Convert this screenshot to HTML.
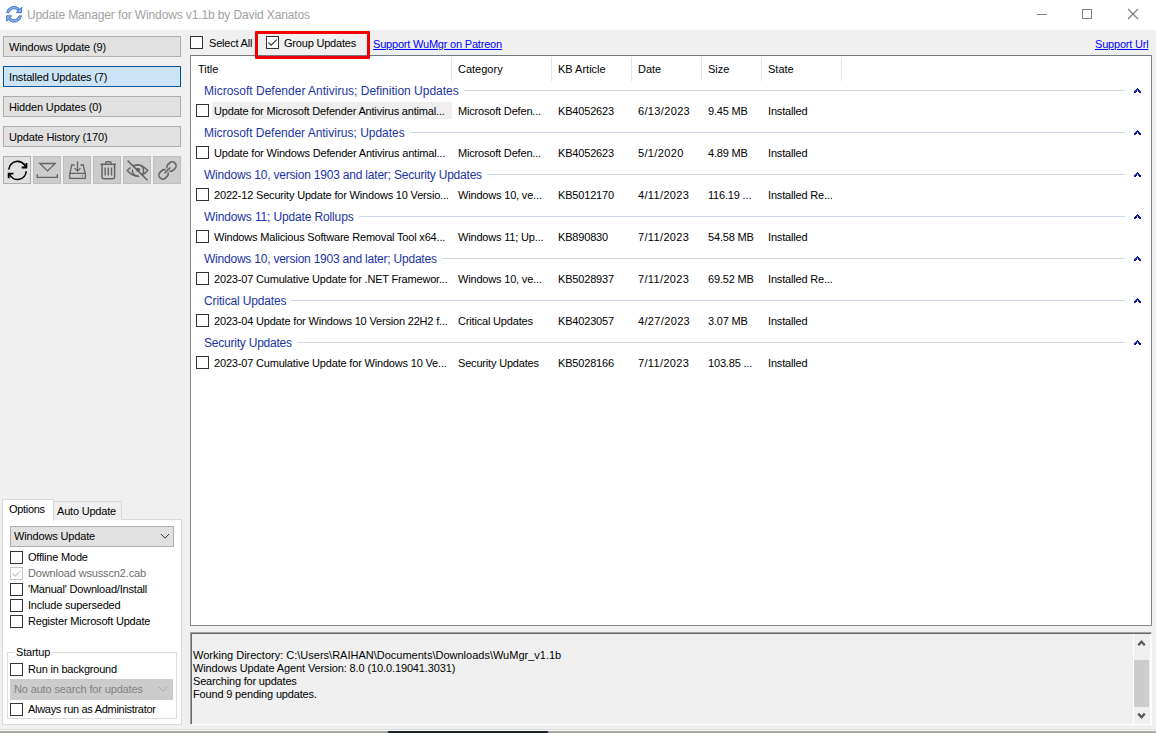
<!DOCTYPE html>
<html><head><meta charset="utf-8">
<style>
*{box-sizing:border-box;margin:0;padding:0}
html,body{width:1156px;height:733px;overflow:hidden;background:#f0f0f0;font-family:"Liberation Sans",sans-serif;font-size:11px;color:#000}
.a{position:absolute}
.t{position:absolute;white-space:nowrap;line-height:13px}
#titlebar{left:0;top:0;width:1156px;height:30px;background:#fff}
.btn{position:absolute;left:3px;width:178px;height:21px;background:#e1e1e1;border:1px solid #adadad}
.btn.sel{background:#cce4f7;border-color:#005499}
.btn span{position:absolute;left:5px;top:4px;white-space:nowrap;letter-spacing:-0.15px;line-height:13px}
.tb{position:absolute;top:156px;width:28px;height:28px;background:#cccccc;border:1px solid #bfbfbf}
.tb svg{position:absolute;left:-1px;top:-1px}
.cb{position:absolute;width:13px;height:13px;border:1px solid #333;background:#fff}
.cb.dis{border-color:#c5c5c5}
#list{left:190px;top:55px;width:962px;height:571px;background:#fff;border:1px solid #828790;border-top-color:#747880}
.hs{position:absolute;top:57px;width:1px;height:24px;background:#e5e5e5}
.hd{position:absolute;top:63px;white-space:nowrap;line-height:13px}
.gh{position:absolute;left:204px;width:921px;display:flex;align-items:center;font-size:12px;color:#1c34a4;white-space:nowrap;line-height:14px}
.gl{flex:1;height:1px;background:#d0d9ec;margin-left:5px;position:relative;top:-1px}
.chev{position:absolute;left:1134px}
.it{position:absolute;white-space:nowrap;line-height:13px;letter-spacing:-0.18px}
.hl{position:absolute;left:212px;width:240px;height:17px;background:#efefef}
#log{left:190px;top:632px;width:962px;height:93px;background:#f0f0f0;border-top:1px solid #a0a0a0;border-left:1px solid #a0a0a0;border-right:1px solid #fff;border-bottom:1px solid #fff;box-shadow:inset 1px 1px 0 #696969}
.lk{color:#0000ff;text-decoration:underline}
</style></head><body>
<!-- title bar -->
<div id="titlebar" class="a"></div>
<svg class="a" style="left:0;top:0" width="28" height="28" viewBox="0 0 28 28">
  <g fill="#86b2f0" stroke="#3d71c4" stroke-width="0.9" stroke-linejoin="miter">
  <g id="ua"><path d="M6.6 12.7 A7.45 7.45 0 0 1 19.3 8.6 L17.6 10.3 A5.1 5.1 0 0 0 9 12.7 Z"/>
  <path d="M21.5 7.2 L21.5 12.7 L16.3 12.7 Z"/></g>
  <use href="#ua" transform="rotate(180 14.05 14.25)"/>
  </g>
</svg>
<div class="t" style="left:27px;top:9px;font-size:12px;color:#a2a2a2;letter-spacing:-0.12px">Update Manager for Windows v1.1b by David Xanatos</div>
<div class="a" style="left:1037px;top:14px;width:10px;height:1px;background:#808080"></div>
<div class="a" style="left:1082px;top:9px;width:10px;height:10px;border:1px solid #808080"></div>
<svg class="a" style="left:1127px;top:8px" width="12" height="12" viewBox="0 0 12 12"><path d="M1 1 L11 11 M11 1 L1 11" stroke="#7a7a7a" stroke-width="1.1"/></svg>

<!-- left nav buttons -->
<div class="btn" style="top:36px"><span>Windows Update (9)</span></div>
<div class="btn sel" style="top:66px"><span>Installed Updates (7)</span></div>
<div class="btn" style="top:96px"><span>Hidden Updates (0)</span></div>
<div class="btn" style="top:126px"><span>Update History (170)</span></div>

<!-- toolbar -->
<div class="tb" style="left:3px;background:#e1e1e1;border-color:#adadad">
<svg width="28" height="28" viewBox="0 0 28 28" fill="none" stroke="#000" stroke-width="1.6">
  <path d="M5.8 13.6 A8.7 8.7 0 0 1 22.6 10.9"/>
  <path d="M23.4 6.9 V11.5 H18.7" stroke-width="1.9"/>
  <path d="M23.2 15.2 A8.7 8.7 0 0 1 6.6 18.4"/>
  <path d="M5.7 22.3 V17.6 H10.5" stroke-width="1.9"/>
</svg></div>
<div class="tb" style="left:33px">
<svg width="28" height="28" viewBox="0 0 28 28" fill="none" stroke="#646464" stroke-width="1.3">
  <path d="M6.8 7.5 H22.2 L14.5 14.9 Z"/>
  <path d="M4.3 18.2 V21.4 H24.3 V18.2" stroke-width="1.4"/>
</svg></div>
<div class="tb" style="left:63px">
<svg width="28" height="28" viewBox="0 0 28 28" fill="none" stroke="#646464" stroke-width="1.3">
  <path d="M11.6 9 H8.7 L7 17.4 M17.4 9 H20.3 L22.1 17.4"/>
  <rect x="6.8" y="17.4" width="15.6" height="5"/>
  <path d="M14.5 5.2 V15 M11.5 12.1 L14.5 15.1 L17.5 12.1"/>
  <circle cx="19.3" cy="20" r="0.7" fill="#646464" stroke="none"/>
</svg></div>
<div class="tb" style="left:93px">
<svg width="28" height="28" viewBox="0 0 28 28" fill="none" stroke="#646464" stroke-width="1.5">
  <path d="M7.5 8.3 H22.9"/>
  <path d="M12.7 8.3 V7 Q12.7 5.8 13.9 5.8 H16.9 Q18.1 5.8 18.1 7 V8.3"/>
  <path d="M9 8.3 V21 Q9 22.7 10.7 22.7 H19.9 Q21.6 22.7 21.6 21 V8.3"/>
  <path d="M12.2 11.5 V19.5 M15.3 11.5 V19.5 M18.5 11.5 V19.5" stroke-width="1.4"/>
</svg></div>
<div class="tb" style="left:123px">
<svg width="28" height="28" viewBox="0 0 28 28" fill="none" stroke="#646464" stroke-width="1.4">
  <path d="M4.3 14.5 Q14.5 2.9 24.7 14.5 Q14.5 25.8 4.3 14.5 Z"/>
  <circle cx="15" cy="14.5" r="5.6"/>
  <path d="M3.4 5.6 L23.2 25.3" stroke="#cccccc" stroke-width="2.4"/>
  <circle cx="15.1" cy="13.8" r="2.1" fill="#646464" stroke="none"/>
  <path d="M4.6 4.6 L24.4 24.3" stroke-width="1.5"/>
</svg></div>
<div class="tb" style="left:153px">
<svg width="28" height="28" viewBox="0 0 28 28" fill="none" stroke="#646464" stroke-width="1.6">
  <path transform="translate(18.4 10.6) rotate(-45)" d="M-4.6 -1.75 A3.9 3.9 0 0 1 -1.1 -3.9 L1.1 -3.9 A3.9 3.9 0 0 1 1.1 3.9 L-1.1 3.9 A3.9 3.9 0 0 1 -4.6 1.75"/>
  <path transform="translate(10.6 18.4) rotate(135)" d="M-4.6 -1.75 A3.9 3.9 0 0 1 -1.1 -3.9 L1.1 -3.9 A3.9 3.9 0 0 1 1.1 3.9 L-1.1 3.9 A3.9 3.9 0 0 1 -4.6 1.75"/>
  <path d="M11.6 17.3 L17.4 11.5"/>
</svg></div>
<!-- top controls -->
<div class="cb" style="left:190px;top:36px"></div>
<div class="t" style="left:209px;top:37px;letter-spacing:-0.2px">Select All</div>
<div class="cb" style="left:266px;top:36px"></div>
<svg class="a" style="left:266px;top:36px" width="13" height="13" viewBox="0 0 13 13"><path d="M2.5 6.5 L5.2 9.2 L10.6 3.6" fill="none" stroke="#333" stroke-width="1.1"/></svg>
<div class="t" style="left:284px;top:37px;letter-spacing:-0.2px">Group Updates</div>
<div class="a" style="left:255px;top:31px;width:115px;height:28px;border:3px solid #f20000;border-radius:1px;z-index:5"></div>
<div class="t lk" style="left:373px;top:38px;letter-spacing:-0.2px">Support WuMgr on Patreon</div>
<div class="t lk" style="left:1095px;top:38px;letter-spacing:-0.2px">Support Url</div>

<!-- list -->
<div id="list" class="a"></div>
<div class="hd" style="left:198px">Title</div>
<div class="hs" style="left:451px"></div>
<div class="hd" style="left:458px">Category</div>
<div class="hs" style="left:551px"></div>
<div class="hd" style="left:558px">KB Article</div>
<div class="hs" style="left:631px"></div>
<div class="hd" style="left:638px">Date</div>
<div class="hs" style="left:701px"></div>
<div class="hd" style="left:708px">Size</div>
<div class="hs" style="left:761px"></div>
<div class="hd" style="left:768px">State</div>
<div class="hs" style="left:841px"></div>

<div class="gh" style="top:84px"><span style="letter-spacing:0px">Microsoft Defender Antivirus; Definition Updates</span><i class="gl"></i></div>
<svg class="chev" style="top:88px" width="7" height="5" viewBox="0 0 7 5" shape-rendering="crispEdges" fill="#0d2296"><rect x="3" y="0" width="1" height="1"/><rect x="2" y="1" width="3" height="1"/><rect x="1" y="2" width="2" height="1"/><rect x="4" y="2" width="2" height="1"/><rect x="3" y="2" width="1" height="1" opacity="0.45"/><rect x="0" y="3" width="3" height="1"/><rect x="4" y="3" width="3" height="1"/><rect x="0" y="4" width="2" height="1"/><rect x="5" y="4" width="2" height="1"/></svg>
<div class="hl" style="top:102px"></div>
<div class="cb" style="left:196px;top:104px"></div>
<div class="it" style="left:214px;top:105px">Update for Microsoft Defender Antivirus antimal...</div>
<div class="it" style="left:458px;top:105px">Microsoft Defen...</div>
<div class="it" style="left:558px;top:105px">KB4052623</div>
<div class="it" style="left:638px;top:105px;letter-spacing:0.35px">6/13/2023</div>
<div class="it" style="left:708px;top:105px">9.45 MB</div>
<div class="it" style="left:768px;top:105px">Installed</div>
<div class="gh" style="top:126px"><span style="letter-spacing:-0.02px">Microsoft Defender Antivirus; Updates</span><i class="gl"></i></div>
<svg class="chev" style="top:130px" width="7" height="5" viewBox="0 0 7 5" shape-rendering="crispEdges" fill="#0d2296"><rect x="3" y="0" width="1" height="1"/><rect x="2" y="1" width="3" height="1"/><rect x="1" y="2" width="2" height="1"/><rect x="4" y="2" width="2" height="1"/><rect x="3" y="2" width="1" height="1" opacity="0.45"/><rect x="0" y="3" width="3" height="1"/><rect x="4" y="3" width="3" height="1"/><rect x="0" y="4" width="2" height="1"/><rect x="5" y="4" width="2" height="1"/></svg>
<div class="cb" style="left:196px;top:146px"></div>
<div class="it" style="left:214px;top:147px">Update for Windows Defender Antivirus antimal...</div>
<div class="it" style="left:458px;top:147px">Microsoft Defen...</div>
<div class="it" style="left:558px;top:147px">KB4052623</div>
<div class="it" style="left:638px;top:147px;letter-spacing:0.35px">5/1/2020</div>
<div class="it" style="left:708px;top:147px">4.89 MB</div>
<div class="it" style="left:768px;top:147px">Installed</div>
<div class="gh" style="top:168px"><span style="letter-spacing:-0.21px">Windows 10, version 1903 and later; Security Updates</span><i class="gl"></i></div>
<svg class="chev" style="top:172px" width="7" height="5" viewBox="0 0 7 5" shape-rendering="crispEdges" fill="#0d2296"><rect x="3" y="0" width="1" height="1"/><rect x="2" y="1" width="3" height="1"/><rect x="1" y="2" width="2" height="1"/><rect x="4" y="2" width="2" height="1"/><rect x="3" y="2" width="1" height="1" opacity="0.45"/><rect x="0" y="3" width="3" height="1"/><rect x="4" y="3" width="3" height="1"/><rect x="0" y="4" width="2" height="1"/><rect x="5" y="4" width="2" height="1"/></svg>
<div class="cb" style="left:196px;top:188px"></div>
<div class="it" style="left:214px;top:189px">2022-12 Security Update for Windows 10 Versio...</div>
<div class="it" style="left:458px;top:189px">Windows 10, ve...</div>
<div class="it" style="left:558px;top:189px">KB5012170</div>
<div class="it" style="left:638px;top:189px;letter-spacing:0.35px">4/11/2023</div>
<div class="it" style="left:708px;top:189px">116.19 ...</div>
<div class="it" style="left:768px;top:189px">Installed Re...</div>
<div class="gh" style="top:210px"><span style="letter-spacing:-0.14px">Windows 11; Update Rollups</span><i class="gl"></i></div>
<svg class="chev" style="top:214px" width="7" height="5" viewBox="0 0 7 5" shape-rendering="crispEdges" fill="#0d2296"><rect x="3" y="0" width="1" height="1"/><rect x="2" y="1" width="3" height="1"/><rect x="1" y="2" width="2" height="1"/><rect x="4" y="2" width="2" height="1"/><rect x="3" y="2" width="1" height="1" opacity="0.45"/><rect x="0" y="3" width="3" height="1"/><rect x="4" y="3" width="3" height="1"/><rect x="0" y="4" width="2" height="1"/><rect x="5" y="4" width="2" height="1"/></svg>
<div class="cb" style="left:196px;top:230px"></div>
<div class="it" style="left:214px;top:231px">Windows Malicious Software Removal Tool x64...</div>
<div class="it" style="left:458px;top:231px">Windows 11; Up...</div>
<div class="it" style="left:558px;top:231px">KB890830</div>
<div class="it" style="left:638px;top:231px;letter-spacing:0.35px">7/11/2023</div>
<div class="it" style="left:708px;top:231px">54.58 MB</div>
<div class="it" style="left:768px;top:231px">Installed</div>
<div class="gh" style="top:252px"><span style="letter-spacing:-0.22px">Windows 10, version 1903 and later; Updates</span><i class="gl"></i></div>
<svg class="chev" style="top:256px" width="7" height="5" viewBox="0 0 7 5" shape-rendering="crispEdges" fill="#0d2296"><rect x="3" y="0" width="1" height="1"/><rect x="2" y="1" width="3" height="1"/><rect x="1" y="2" width="2" height="1"/><rect x="4" y="2" width="2" height="1"/><rect x="3" y="2" width="1" height="1" opacity="0.45"/><rect x="0" y="3" width="3" height="1"/><rect x="4" y="3" width="3" height="1"/><rect x="0" y="4" width="2" height="1"/><rect x="5" y="4" width="2" height="1"/></svg>
<div class="cb" style="left:196px;top:272px"></div>
<div class="it" style="left:214px;top:273px">2023-07 Cumulative Update for .NET Framewor...</div>
<div class="it" style="left:458px;top:273px">Windows 10, ve...</div>
<div class="it" style="left:558px;top:273px">KB5028937</div>
<div class="it" style="left:638px;top:273px;letter-spacing:0.35px">7/11/2023</div>
<div class="it" style="left:708px;top:273px">69.52 MB</div>
<div class="it" style="left:768px;top:273px">Installed Re...</div>
<div class="gh" style="top:294px"><span style="letter-spacing:-0.14px">Critical Updates</span><i class="gl"></i></div>
<svg class="chev" style="top:298px" width="7" height="5" viewBox="0 0 7 5" shape-rendering="crispEdges" fill="#0d2296"><rect x="3" y="0" width="1" height="1"/><rect x="2" y="1" width="3" height="1"/><rect x="1" y="2" width="2" height="1"/><rect x="4" y="2" width="2" height="1"/><rect x="3" y="2" width="1" height="1" opacity="0.45"/><rect x="0" y="3" width="3" height="1"/><rect x="4" y="3" width="3" height="1"/><rect x="0" y="4" width="2" height="1"/><rect x="5" y="4" width="2" height="1"/></svg>
<div class="cb" style="left:196px;top:314px"></div>
<div class="it" style="left:214px;top:315px">2023-04 Update for Windows 10 Version 22H2 f...</div>
<div class="it" style="left:458px;top:315px">Critical Updates</div>
<div class="it" style="left:558px;top:315px">KB4023057</div>
<div class="it" style="left:638px;top:315px;letter-spacing:0.35px">4/27/2023</div>
<div class="it" style="left:708px;top:315px">3.07 MB</div>
<div class="it" style="left:768px;top:315px">Installed</div>
<div class="gh" style="top:336px"><span style="letter-spacing:-0.22px">Security Updates</span><i class="gl"></i></div>
<svg class="chev" style="top:340px" width="7" height="5" viewBox="0 0 7 5" shape-rendering="crispEdges" fill="#0d2296"><rect x="3" y="0" width="1" height="1"/><rect x="2" y="1" width="3" height="1"/><rect x="1" y="2" width="2" height="1"/><rect x="4" y="2" width="2" height="1"/><rect x="3" y="2" width="1" height="1" opacity="0.45"/><rect x="0" y="3" width="3" height="1"/><rect x="4" y="3" width="3" height="1"/><rect x="0" y="4" width="2" height="1"/><rect x="5" y="4" width="2" height="1"/></svg>
<div class="cb" style="left:196px;top:356px"></div>
<div class="it" style="left:214px;top:357px">2023-07 Cumulative Update for Windows 10 Ve...</div>
<div class="it" style="left:458px;top:357px">Security Updates</div>
<div class="it" style="left:558px;top:357px">KB5028166</div>
<div class="it" style="left:638px;top:357px;letter-spacing:0.35px">7/11/2023</div>
<div class="it" style="left:708px;top:357px">103.85 ...</div>
<div class="it" style="left:768px;top:357px">Installed</div>

<!-- log -->
<div id="log" class="a"></div>
<div class="t" style="left:193px;top:649px">Working Directory: C:\Users\RAIHAN\Documents\Downloads\WuMgr_v1.1b</div>
<div class="t" style="left:193px;top:662px;letter-spacing:-0.12px">Windows Update Agent Version: 8.0 (10.0.19041.3031)</div>
<div class="t" style="left:193px;top:675px;letter-spacing:-0.19px">Searching for updates</div>
<div class="t" style="left:193px;top:688px;letter-spacing:-0.17px">Found 9 pending updates.</div>


<!-- left tab control -->
<div class="a" style="left:2px;top:519px;width:180px;height:206px;background:#fff;border:1px solid #d9d9d9"></div>
<div class="a" style="left:53px;top:501px;width:69px;height:19px;background:#f0f0f0;border:1px solid #d9d9d9;border-bottom:none"></div>
<div class="a" style="left:2px;top:499px;width:52px;height:22px;background:#fff;border:1px solid #d9d9d9;border-bottom:none"></div>
<div class="t" style="left:9px;top:503px;letter-spacing:-0.3px">Options</div>
<div class="t" style="left:57px;top:505px;letter-spacing:-0.2px">Auto Update</div>
<div class="a" style="left:10px;top:526px;width:164px;height:21px;background:#e1e1e1;border:1px solid #adadad"></div>
<div class="t" style="left:14px;top:530px;letter-spacing:-0.15px">Windows Update</div>
<svg class="a" style="left:160px;top:533px" width="10" height="7" viewBox="0 0 10 7"><path d="M1 1 L5 5.2 L9 1" fill="none" stroke="#333" stroke-width="1"/></svg>
<div class="cb" style="left:10px;top:551px"></div><div class="t" style="left:28px;top:551px;letter-spacing:-0.2px">Offline Mode</div>
<div class="cb dis" style="left:10px;top:567px"></div>
<svg class="a" style="left:10px;top:567px" width="13" height="13" viewBox="0 0 13 13"><path d="M2.5 6.5 L5.2 9.2 L10.6 3.6" fill="none" stroke="#c5c5c5" stroke-width="1.1"/></svg>
<div class="t" style="left:28px;top:567px;color:#6d6d6d;letter-spacing:-0.15px">Download wsusscn2.cab</div>
<div class="cb" style="left:10px;top:583px"></div><div class="t" style="left:28px;top:583px;letter-spacing:-0.2px">'Manual' Download/Install</div>
<div class="cb" style="left:10px;top:599px"></div><div class="t" style="left:28px;top:599px;letter-spacing:-0.2px">Include superseded</div>
<div class="cb" style="left:10px;top:615px"></div><div class="t" style="left:28px;top:615px;letter-spacing:-0.2px">Register Microsoft Update</div>
<div class="a" style="left:7px;top:652px;width:170px;height:67px;border:1px solid #dcdcdc"></div>
<div class="t" style="left:14px;top:646px;padding:0 2px;background:#fff;letter-spacing:-0.2px">Startup</div>
<div class="cb" style="left:10px;top:663px"></div><div class="t" style="left:28px;top:663px;letter-spacing:-0.2px">Run in background</div>
<div class="a" style="left:10px;top:679px;width:163px;height:21px;background:#cccccc;border:1px solid #cccccc"></div>
<div class="t" style="left:14px;top:683px;color:#838383;letter-spacing:-0.15px">No auto search for updates</div>
<svg class="a" style="left:158px;top:686px" width="10" height="7" viewBox="0 0 10 7"><path d="M1 1 L5 5.2 L9 1" fill="none" stroke="#a8a8a8" stroke-width="1"/></svg>
<div class="cb" style="left:10px;top:703px"></div><div class="t" style="left:28px;top:703px;letter-spacing:-0.3px">Always run as Administrator</div>

<!-- log scrollbar -->
<div class="a" style="left:1133px;top:634px;width:18px;height:90px;background:#f0f0f0;border-left:1px solid #fff;border-right:1px solid #fff"></div>
<svg class="a" style="left:1137px;top:639px" width="9" height="8" viewBox="0 0 9 8"><path d="M1.2 6.2 L4.5 2.6 L7.8 6.2" fill="none" stroke="#5a5a5a" stroke-width="2.3"/></svg>
<div class="a" style="left:1134px;top:660px;width:15px;height:47px;background:#cdcdcd"></div>
<svg class="a" style="left:1137px;top:712px" width="9" height="8" viewBox="0 0 9 8"><path d="M1.2 1.6 L4.5 5.2 L7.8 1.6" fill="none" stroke="#5a5a5a" stroke-width="2.3"/></svg>
<!-- bottom strip -->
<div class="a" style="left:0;top:729px;width:1156px;height:1px;background:#dadada"></div>
<div class="a" style="left:0;top:730px;width:1156px;height:1px;background:#fff"></div>
<div class="a" style="left:0;top:731px;width:1156px;height:2px;background:#a9aaa5"></div>
<div class="a" style="left:388px;top:731px;width:160px;height:2px;background:#1d2126"></div>
</body></html>
